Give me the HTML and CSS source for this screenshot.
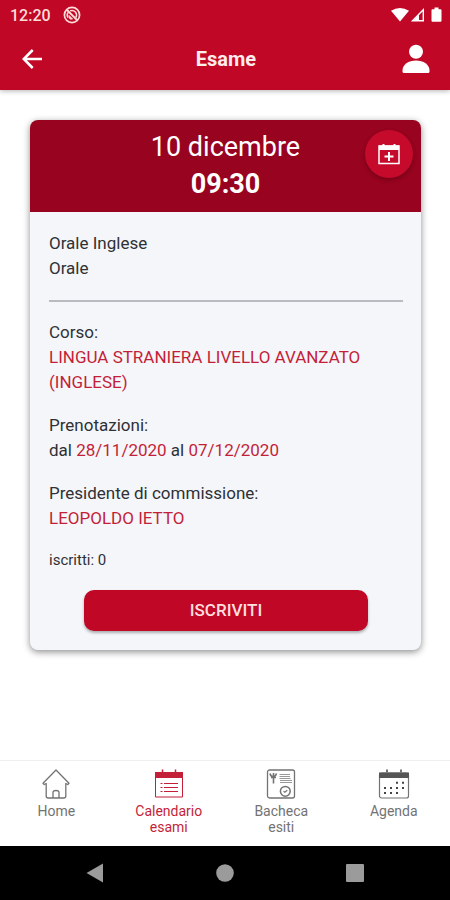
FILE: index.html
```html
<!DOCTYPE html>
<html lang="it">
<head>
<meta charset="utf-8">
<meta name="viewport" content="width=device-width, initial-scale=1">
<title>Esame</title>
<link rel="stylesheet" href="styles.css">
</head>
<body>
<header class="top">
  <div class="status">
    <span class="clock">12:20</span>
    <svg width="18" height="18" viewBox="0 0 18 18" fill="none" stroke="currentColor" aria-hidden="true">
      <circle cx="9" cy="9" r="7.600" stroke-width="1.700"/>
      <path d="M5.200 11.800A4.600 4.600 0 0 1 5.500 6M7 4.900a4.600 4.600 0 0 1 5.800 6.600" stroke-width="1.500"/>
      <path d="M4 4l10 10" stroke-width="1.800"/>
      <path d="M6 9.500l3.500 3.500H7z" fill="currentColor"/>
    </svg>
    <svg class="status-signals" width="52" height="16" viewBox="0 0 52 16" fill="currentColor" aria-hidden="true">
      <path d="M0 3.800Q9 -1.800 18 3.800L9 14.500z"/>
      <path d="M32.300 2.800V13.800H21.500z" fill="none" stroke="currentColor" stroke-width="1.400"/>
      <path d="M28 7.500V14H22z"/>
      <path d="M43.500 .5h4v1.700h2a1 1 0 0 1 1 1v10.500a1 1 0 0 1-1 1h-8a1 1 0 0 1-1-1V3.200a1 1 0 0 1 1-1h2z"/>
    </svg>
  </div>
  <div class="toolbar">
    <button class="icon-button" type="button" aria-label="Indietro">
      <svg width="20" height="20" viewBox="0 0 20 20" fill="none" stroke="currentColor" stroke-width="2.500" aria-hidden="true"><path d="M20 10H2M10.700 1L1.800 10l8.900 9"/></svg>
    </button>
    <h1 class="title">Esame</h1>
    <button class="icon-button" type="button" aria-label="Profilo">
      <svg width="28" height="30" viewBox="0 0 28 30" fill="currentColor" aria-hidden="true"><circle cx="14" cy="7.700" r="7"/><path d="M.5 27.500v-1C.5 20.500 6.500 16.500 14 16.500s13.500 4 13.500 10v1q0 1.500-1.500 1.500H2q-1.500 0-1.500-1.500z"/></svg>
    </button>
  </div>
</header>

<main class="content">
  <article class="card">
    <header class="card-head">
      <p class="date">10 dicembre</p>
      <p class="time">09:30</p>
      <button class="add" type="button" aria-label="Aggiungi al calendario">
        <svg width="22" height="22" viewBox="0 0 22 22" fill="none" stroke="currentColor" aria-hidden="true">
          <path d="M1 3h20v17.500H1z" stroke-width="1.500"/>
          <path d="M1 2.500h20v4.500H1z" fill="currentColor" stroke="none"/>
          <path d="M5.500 1v3M16.500 1v3" stroke-width="2"/>
          <path d="M11 9v9M6.500 13.500h9" stroke-width="2"/>
        </svg>
      </button>
    </header>
    <div class="card-body">
      <p>Orale Inglese<br>Orale</p>
      <hr class="rule">
      <p>Corso:<br><span class="accent">LINGUA STRANIERA LIVELLO AVANZATO (INGLESE)</span></p>
      <p>Prenotazioni:<br>dal <span class="accent">28/11/2020</span> al <span class="accent">07/12/2020</span></p>
      <p>Presidente di commissione:<br><span class="accent">LEOPOLDO IETTO</span></p>
      <p class="count">iscritti: 0</p>
      <button class="enroll" type="button">ISCRIVITI</button>
    </div>
  </article>
</main>

<nav class="tabs">
  <a class="tab" href="#home">
    <svg width="30" height="30" viewBox="0 0 30 30" fill="none" stroke="currentColor" stroke-width="1.300" stroke-linejoin="round" aria-hidden="true">
      <path d="M15 1L2 14.200l1.200 1.300 2-1V27q0 2 2 2h15.600q2 0 2-2V14.500l2 1 1.200-1.300z"/>
      <path d="M12 29v-5.500q0-2 3-2t3 2V29"/>
    </svg>
    <span>Home</span>
  </a>
  <a class="tab active" href="#calendario" aria-current="page">
    <svg width="30" height="30" viewBox="0 0 30 30" fill="none" stroke="currentColor" aria-hidden="true">
      <path d="M1.500 4.500h27v23.500h-27z"/>
      <path d="M1 3h28v6H1z" fill="currentColor" stroke="none"/>
      <path d="M8.500 .5v3M21.500 .5v3" stroke-width="1.500"/>
      <path d="M6.500 14.500h2M6.500 18.500h2M6.500 22.500h2M10 14.500h14M10 18.500h14M10 22.500h14"/>
    </svg>
    <span>Calendario esami</span>
  </a>
  <a class="tab" href="#bacheca">
    <svg width="30" height="30" viewBox="0 0 30 30" fill="none" stroke="currentColor" aria-hidden="true">
      <rect x="1.500" y="1" width="27" height="28" rx="2" stroke-width="1.300"/>
      <path d="M4 4.500q.5 3 3.500 3.500Q10 7 10.500 4.500M7.500 4v10.500M5 8.500h5" stroke-width="1.600"/>
      <path d="M13.500 5.500h10.500M13.500 7.500h10.500M13.500 9.500h11M14 11.500h12M14 13.500h12" stroke="#999"/>
      <circle cx="19.300" cy="22.300" r="4.900" stroke-width="1.500"/>
      <path d="M17.500 22.300l1.300 1 2.500-2" stroke-width="1.200"/>
    </svg>
    <span>Bacheca esiti</span>
  </a>
  <a class="tab" href="#agenda">
    <svg width="32" height="30" viewBox="0 0 32 30" fill="none" stroke="currentColor" aria-hidden="true">
      <rect x="1.500" y="4" width="29" height="25" rx="2" stroke-width="1.200"/>
      <path d="M1 3.500h30V9H1z" fill="#555" stroke="none"/>
      <path d="M9 .5v3M23 .5v3" stroke-width="2"/>
      <path d="M18 13.800h2M24 13.800h2M6 19h2M12 19h2M18 19h2M24 19h2M6 24h2M12 24h2M18 24h2" stroke="#444" stroke-width="2"/>
    </svg>
    <span>Agenda</span>
  </a>
</nav>

<div class="system">
  <button type="button" aria-label="Indietro (sistema)"><svg width="18" height="20" viewBox="0 0 18 20" fill="currentColor" aria-hidden="true"><path d="M17 .5v19L.5 10z"/></svg></button>
  <button type="button" aria-label="Schermata iniziale"><svg width="18" height="18" viewBox="0 0 18 18" fill="currentColor" aria-hidden="true"><circle cx="9" cy="9" r="8.800"/></svg></button>
  <button type="button" aria-label="App recenti"><svg width="18" height="18" viewBox="0 0 18 18" fill="currentColor" aria-hidden="true"><rect width="18" height="18" rx="1"/></svg></button>
</div>
</body>
</html>
```
FILE: styles.css
```css
* {
  box-sizing: border-box;
}

body {
  margin: 0;
  min-height: 100vh;
  display: flex;
  flex-direction: column;
  background: #fff;
  color: #2f3134;
  font-family: Roboto, "Liberation Sans", sans-serif;
  font-size: 17px;
  line-height: 25px;
}

h1,
p {
  margin: 0;
}

button {
  padding: 0;
  border: 0;
  background: none;
  color: inherit;
  font: inherit;
  cursor: pointer;
}

svg {
  display: block;
}

.top {
  background: #c00726;
  color: #fff;
  box-shadow: 0 1px 5px rgba(0, 0, 0, 0.3);
}

.status {
  display: flex;
  align-items: center;
  gap: 12px;
  height: 30px;
  padding: 0 7px 0 10px;
  color: #ffdcd8;
}

.clock {
  font-size: 16px;
  font-weight: 500;
}

.status-signals {
  margin-left: auto;
  color: #fff;
}

.toolbar {
  display: grid;
  grid-template-columns: 1fr auto 1fr;
  align-items: center;
  height: 60px;
  padding: 0 20px 2px 22px;
}

.icon-button:last-child {
  justify-self: end;
}

.icon-button:first-child {
  justify-self: start;
}

.title {
  color: #ffeceb;
  font-size: 20px;
  font-weight: 700;
}

.content {
  flex: 1;
  padding: 30px 29px 30px 30px;
}

.card {
  border-radius: 8px;
  background: #f4f6fa;
  box-shadow: 0 2px 7px rgba(0, 0, 0, 0.45);
}

.card-head {
  position: relative;
  padding: 9px 0;
  border-radius: 8px 8px 0 0;
  background: #98031f;
  color: #fff;
  font-size: 27px;
  line-height: 37px;
  text-align: center;
}

.time {
  font-weight: 700;
}

.add {
  position: absolute;
  top: 10px;
  right: 8px;
  display: grid;
  place-items: center;
  width: 48px;
  height: 48px;
  border-radius: 50%;
  background: #c60a2b;
  box-shadow: 0 2px 4px rgba(0, 0, 0, 0.25);
}

.card-body {
  display: flex;
  flex-direction: column;
  gap: 18px;
  padding: 19px 18px 19px 19px;
}

.rule {
  width: 100%;
  height: 2px;
  margin: 1px 0 0;
  border: 0;
  background: #b9bbc0;
}

.accent {
  color: #c41f38;
}

.count {
  font-size: 15px;
  line-height: 23px;
}

.enroll {
  align-self: center;
  width: 80%;
  height: 41px;
  border-radius: 10px;
  background: #c00726;
  color: #ffdfdf;
  font-weight: 500;
  box-shadow: 0 2px 3px rgba(0, 0, 0, 0.3);
}

.tabs {
  display: grid;
  grid-template-columns: repeat(4, 1fr);
  height: 86px;
  padding-top: 8px;
  border-top: 1px solid #f0f0f0;
}

.tab {
  display: flex;
  flex-direction: column;
  align-items: center;
  gap: 4px;
  padding: 0 16px;
  color: #737373;
  font-size: 14px;
  line-height: 16px;
  text-align: center;
  text-decoration: none;
}

.tab.active {
  color: #c41f38;
}

.system {
  display: flex;
  justify-content: space-between;
  align-items: center;
  height: 54px;
  padding: 0 86px;
  background: #000;
  color: #9b9b9b;
}
```
